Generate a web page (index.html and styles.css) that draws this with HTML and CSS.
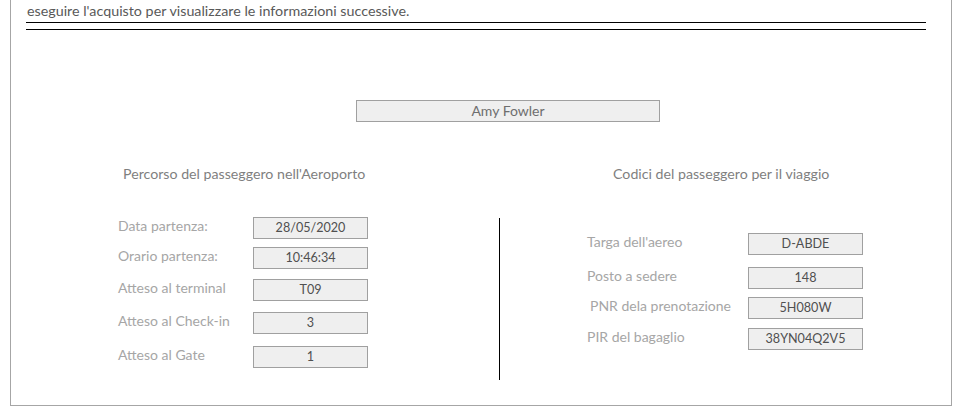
FILE: index.html
```html
<!DOCTYPE html>
<html lang="it">
<head>
<meta charset="utf-8">
<title>Passeggero</title>
<link rel="stylesheet" href="styles.css">
</head>
<body>
<div class="frame">
  <p class="notice">eseguire l'acquisto per visualizzare le informazioni successive.</p>
  <div class="rule"></div>
  <div class="namebox">Amy Fowler</div>
  <div class="sections">
    <div class="col col-left">
      <h2 class="heading heading-left">Percorso del passeggero nell'Aeroporto</h2>
      <div class="rows rows-left">
        <div class="row"><span class="label">Data partenza:</span><span class="box">28/05/2020</span></div>
        <div class="row r2"><span class="label">Orario partenza:</span><span class="box">10:46:34</span></div>
        <div class="row r3"><span class="label">Atteso al terminal</span><span class="box">T09</span></div>
        <div class="row r4"><span class="label">Atteso al Check-in</span><span class="box">3</span></div>
        <div class="row r5"><span class="label">Atteso al Gate</span><span class="box">1</span></div>
      </div>
    </div>
    <div class="divider"></div>
    <div class="col col-right">
      <h2 class="heading heading-right">Codici del passeggero per il viaggio</h2>
      <div class="rows rows-right">
        <div class="row"><span class="label">Targa dell'aereo</span><span class="box">D-ABDE</span></div>
        <div class="row q2"><span class="label">Posto a sedere</span><span class="box">148</span></div>
        <div class="row q3"><span class="label label-indent">PNR dela prenotazione</span><span class="box">5H080W</span></div>
        <div class="row q4"><span class="label">PIR del bagaglio</span><span class="box">38YN04Q2V5</span></div>
      </div>
    </div>
  </div>
</div>
</body>
</html>
```

FILE: styles.css
```css
* { box-sizing: border-box; }
html, body { margin: 0; padding: 0; background: #ffffff; }
body { font-family: Lato, "Open Sans", sans-serif; }

.frame {
  margin-left: 10px;
  width: 942px;
  height: 406px;
  border-left: 1px solid #a6a6a6;
  border-right: 1px solid #a6a6a6;
  border-bottom: 1px solid #a6a6a6;
}

.notice {
  margin: 0;
  padding: 3px 0 0 16px;
  font-size: 14.3px;
  line-height: 16px;
  color: #595959;
}

.rule {
  margin: 3px 0 0 15px;
  width: 900px;
  height: 8px;
  border-top: 1px solid #000;
  border-bottom: 1px solid #000;
}

.namebox {
  margin: 70px 0 0 345px;
  width: 304px;
  height: 22px;
  background: #efefef;
  border: 1px solid #a0a0a0;
  text-align: center;
  font-size: 14px;
  line-height: 20px;
  color: #6e6e6e;
}

.sections {
  display: flex;
  align-items: flex-start;
  margin-top: 43px;
}

.col-left { width: 488px; }
.col-right { flex: 1; }

.heading {
  margin: 0;
  font-weight: normal;
  font-size: 14.2px;
  line-height: 18px;
  color: #7f7f7f;
}
.heading-left { padding-left: 112px; }
.heading-right { padding-left: 113px; }

.divider {
  width: 1px;
  height: 162px;
  margin-top: 53px;
  background: #000;
}

.rows { display: flex; flex-direction: column; }
.rows-left { margin-top: 34px; padding-left: 107px; }
.rows-right { margin-top: 50px; padding-left: 87px; }

.row { display: flex; align-items: flex-start; }
.rows-left .label { width: 135px; }
.rows-right .label { width: 161px; }
.label-indent { padding-left: 3px; }

.label {
  font-size: 14px;
  line-height: 18px;
  color: #a6a6a6;
  white-space: nowrap;
}

.box {
  width: 115px;
  height: 22px;
  background: #efefef;
  border: 1px solid #a0a0a0;
  text-align: center;
  font-size: 12.6px;
  line-height: 20px;
  color: #505050;
}

.r2 { margin-top: 8px; }
.r3 { margin-top: 10px; }
.r4 { margin-top: 11px; }
.r5 { margin-top: 12px; }
.q2 { margin-top: 12px; }
.q3 { margin-top: 8px; }
.q4 { margin-top: 9px; }
```
